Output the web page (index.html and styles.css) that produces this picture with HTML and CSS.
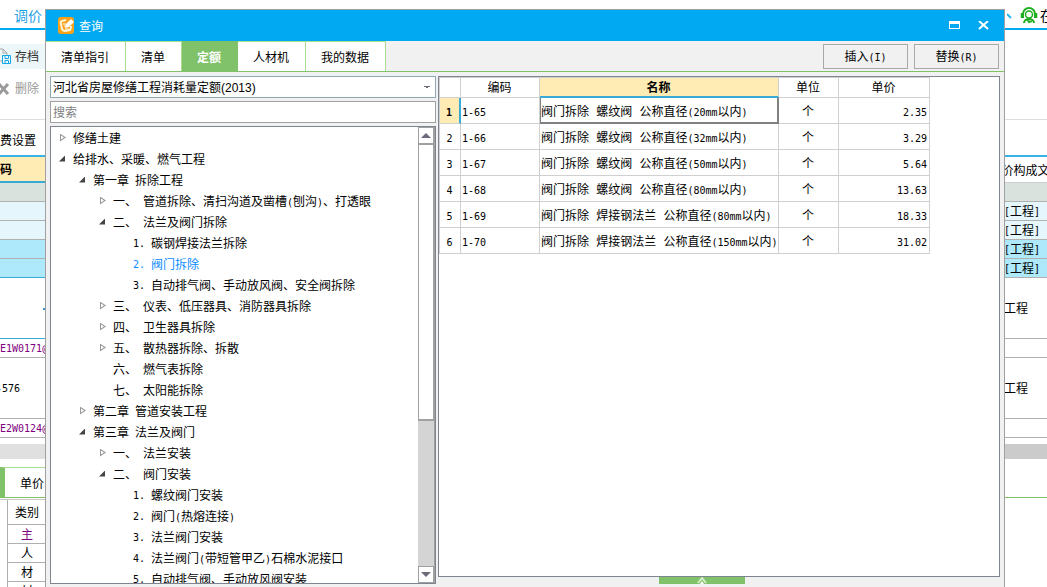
FILE: index.html
```html
<!DOCTYPE html>
<html lang="zh-CN">
<head>
<meta charset="utf-8">
<title>查询</title>
<link rel="stylesheet" href="styles.css">
</head>
<body>
<div class="app">
  <div class="strip strip-left">
    <div class="menu"><a class="menu-link" href="#">调价</a></div>
    <div class="tools">
      <button class="tool active" type="button">
        <svg width="12" height="17" viewBox="0 0 12 17" fill="none"><path d="M0 1H3L7 5V7M3 1V5H7M0 13H3" stroke="#a9a9a9"/><path d="M2.500 7.500H10.500V15.500H2.500ZM5 7V10.500H8.500V7M5 15V12.500H8.500V15" stroke="#14a9e8"/></svg>
        存档</button>
      <button class="tool muted" type="button">
        <svg width="12" height="16" viewBox="0 0 12 16"><path d="M-1 3L8 13M8 3L-1 13" stroke="#9a9a9a" stroke-width="3"/></svg>
        删除</button>
    </div>
    <div class="setting">费设置</div>
    <div class="cell head key">码</div>
    <div class="cell sum"></div>
    <div class="cell pale"></div>
    <div class="cell pale"></div>
    <div class="cell blue"></div>
    <div class="cell blue line-blue"></div>
    <div class="cell tall line-blue"><i class="tick"></i></div>
    <div class="cell code"><span class="n">E1W0171@</span></div>
    <div class="cell tall spec"><span class="n">-576</span></div>
    <div class="cell code"><span class="n">E2W0124@</span></div>
    <div class="hscroll light"></div>
    <div class="subtab">单价</div>
    <div class="kinds">
      <div class="kind kind-head">类别</div>
      <div class="kind purple">主</div>
      <div class="kind">人</div>
      <div class="kind">材</div>
      <div class="kind">材</div>
    </div>
  </div>
  <div class="middle"></div>
  <div class="strip strip-right">
    <div class="menu">
      <svg class="caret" width="5" height="8" viewBox="0 0 5 8"><path d="M0 2L4 6" stroke="#2db5ef" stroke-width="2"/></svg>
      <svg class="help" width="18" height="18" viewBox="0 0 18 18" fill="none" stroke="#1fae1f"><path d="M3 11V7a6 6 0 0 1 12 0v4" stroke-width="2"/><path d="M2 6v5M16 6v5" stroke-width="2.500"/><circle cx="9" cy="7.500" r="3.500" stroke-width="1.500"/><path d="M4 16c0-3 3-4 5-4s5 1 5 4M7 12l2 3 3-1" stroke-width="2"/></svg>
      <span>在线</span>
    </div>
    <div class="tools"></div>
    <div class="setting"></div>
    <div class="cell head">价构成文</div>
    <div class="cell sum"></div>
    <div class="cell pale"><span class="n">[</span>工程<span class="n">]</span></div>
    <div class="cell pale"><span class="n">[</span>工程<span class="n">]</span></div>
    <div class="cell blue"><span class="n">[</span>工程<span class="n">]</span></div>
    <div class="cell blue"><span class="n">[</span>工程<span class="n">]</span></div>
    <div class="cell tall">工程</div>
    <div class="cell"></div>
    <div class="cell tall">工程</div>
    <div class="cell"></div>
    <div class="hscroll"></div>
    <div class="subline"></div>
  </div>
</div>

<div class="dialog" role="dialog" aria-label="查询">
  <header class="titlebar">
    <svg width="17" height="17" viewBox="0 0 17 17" fill="none"><rect width="16" height="17" rx="3" fill="#f8a21b"/><path d="M8 3L4 4Q2 5 3 7L4 12Q5 14 7 14L12 13Q13 12 13 9" stroke="#fff3d6" stroke-width="2"/><path d="M7 11L8 7L13 2L16 5L11 10Z" fill="#fff"/><path d="M5 7H8M6 9H8M7 12H11" stroke="#fff"/></svg>
    <h1 class="title">查询</h1>
    <button class="win" type="button" aria-label="最大化"><svg width="11" height="9" viewBox="0 0 11 9"><path d="M0 0H11V8H0ZM1 3V7H10V3Z" fill="#fff" fill-rule="evenodd"/></svg></button>
    <button class="win" type="button" aria-label="关闭"><svg width="11" height="9" viewBox="0 0 11 9"><path d="M1 0L10 8M10 0L1 8" stroke="#fff" stroke-width="2"/></svg></button>
  </header>
  <div class="bar">
    <nav class="tabs">
      <button class="tab" type="button">清单指引</button>
      <button class="tab" type="button">清单</button>
      <button class="tab current" type="button">定额</button>
      <button class="tab" type="button">人材机</button>
      <button class="tab" type="button">我的数据</button>
    </nav>
    <div class="actions">
      <button class="action" type="button">插入<span class="n">(I)</span></button>
      <button class="action" type="button">替换<span class="n">(R)</span></button>
    </div>
  </div>
  <div class="body">
    <section class="side">
      <select class="field combo" aria-label="定额库"><option>河北省房屋修缮工程消耗量定额(2013)</option></select>
      <input class="field search" type="text" placeholder="搜索" aria-label="搜索">
      <div class="tree-box">
        <ul class="tree">
          <li class="row l0 closed">修缮土建</li>
          <li class="row l0 open">给排水、采暖、燃气工程</li>
          <li class="row l1 open"><span>第一章</span><span>拆除工程</span></li>
          <li class="row l2 closed"><span>一、</span><span>管道拆除、清扫沟道及凿槽<span class="n">(</span>刨沟<span class="n">)</span>、打透眼</span></li>
          <li class="row l2 open"><span>二、</span><span>法兰及阀门拆除</span></li>
          <li class="row l3"><span class="n">1.</span><span>碳钢焊接法兰拆除</span></li>
          <li class="row l3 picked"><span class="n">2.</span><span>阀门拆除</span></li>
          <li class="row l3"><span class="n">3.</span><span>自动排气阀、手动放风阀、安全阀拆除</span></li>
          <li class="row l2 closed"><span>三、</span><span>仪表、低压器具、消防器具拆除</span></li>
          <li class="row l2 closed"><span>四、</span><span>卫生器具拆除</span></li>
          <li class="row l2 closed"><span>五、</span><span>散热器拆除、拆散</span></li>
          <li class="row l2"><span>六、</span><span>燃气表拆除</span></li>
          <li class="row l2"><span>七、</span><span>太阳能拆除</span></li>
          <li class="row l1 closed"><span>第二章</span><span>管道安装工程</span></li>
          <li class="row l1 open"><span>第三章</span><span>法兰及阀门</span></li>
          <li class="row l2 closed"><span>一、</span><span>法兰安装</span></li>
          <li class="row l2 open"><span>二、</span><span>阀门安装</span></li>
          <li class="row l3"><span class="n">1.</span><span>螺纹阀门安装</span></li>
          <li class="row l3"><span class="n">2.</span><span>阀门<span class="n">(</span>热熔连接<span class="n">)</span></span></li>
          <li class="row l3"><span class="n">3.</span><span>法兰阀门安装</span></li>
          <li class="row l3"><span class="n">4.</span><span>法兰阀门<span class="n">(</span>带短管甲乙<span class="n">)</span>石棉水泥接口</span></li>
          <li class="row l3"><span class="n">5.</span><span>自动排气阀、手动放风阀安装</span></li>
        </ul>
        <div class="scroll">
          <button class="step" type="button" aria-label="向上"><svg width="10" height="5" viewBox="0 0 10 5"><path d="M0 5L5 0L10 5Z" fill="#6b6b7b"/></svg></button>
          <div class="thumb"></div>
          <div class="track"></div>
          <button class="step" type="button" aria-label="向下"><svg width="10" height="5" viewBox="0 0 10 5"><path d="M0 0L5 5L10 0Z" fill="#6b6b7b"/></svg></button>
        </div>
      </div>
    </section>
    <section class="main">
      <div class="grid-box">
        <table class="grid">
          <colgroup><col class="c-no"><col class="c-code"><col class="c-name"><col class="c-unit"><col class="c-price"></colgroup>
          <thead><tr><th></th><th>编码</th><th class="hot">名称</th><th>单位</th><th>单价</th></tr></thead>
          <tbody>
            <tr><th class="on"><span class="n">1</span></th><td><span class="n">1-65</span></td><td class="focus">阀门拆除 螺纹阀 公称直径<span class="n">(20mm</span>以内<span class="n">)</span></td><td class="mid">个</td><td class="num"><span class="n">2.35</span></td></tr>
            <tr><th><span class="n">2</span></th><td><span class="n">1-66</span></td><td>阀门拆除 螺纹阀 公称直径<span class="n">(32mm</span>以内<span class="n">)</span></td><td class="mid">个</td><td class="num"><span class="n">3.29</span></td></tr>
            <tr><th><span class="n">3</span></th><td><span class="n">1-67</span></td><td>阀门拆除 螺纹阀 公称直径<span class="n">(50mm</span>以内<span class="n">)</span></td><td class="mid">个</td><td class="num"><span class="n">5.64</span></td></tr>
            <tr><th><span class="n">4</span></th><td><span class="n">1-68</span></td><td>阀门拆除 螺纹阀 公称直径<span class="n">(80mm</span>以内<span class="n">)</span></td><td class="mid">个</td><td class="num"><span class="n">13.63</span></td></tr>
            <tr><th><span class="n">5</span></th><td><span class="n">1-69</span></td><td>阀门拆除 焊接钢法兰 公称直径<span class="n">(80mm</span>以内<span class="n">)</span></td><td class="mid">个</td><td class="num"><span class="n">18.33</span></td></tr>
            <tr><th><span class="n">6</span></th><td><span class="n">1-70</span></td><td>阀门拆除 焊接钢法兰 公称直径<span class="n">(150mm</span>以内<span class="n">)</span></td><td class="mid">个</td><td class="num"><span class="n">31.02</span></td></tr>
          </tbody>
        </table>
      </div>
      <button class="pull" type="button" aria-label="展开"><svg width="10" height="7" viewBox="0 0 10 7"><path d="M1 6L5 1L9 6" stroke="#d5ecca" stroke-width="2" fill="none"/><path d="M3 7L5 4L7 7Z" fill="#fff"/></svg></button>
    </section>
  </div>
</div>
</body>
</html>
```
FILE: styles.css
```css
* { box-sizing: border-box; }

html, body { height: 100%; margin: 0; }

body {
  overflow: hidden;
  background: #fff;
  color: #000;
  font: 12px/18px "DejaVu Sans Mono", "Noto Sans CJK SC", sans-serif;
}

button, input, select { margin: 0; font: inherit; color: inherit; }
button { border: 0; padding: 0; background: none; }

/* Half-width characters, half as wide as a Chinese one */
.n { font-size: 10px; line-height: 1; }

/* Application behind the dialog */
.app { display: grid; grid-template-columns: 46px 1fr 43px; height: 100%; overflow: hidden; }
.strip { overflow: hidden; white-space: nowrap; }

.menu { display: flex; align-items: center; height: 30px; border-bottom: 2px solid #00a9f1; padding-top: 4px; }
.menu-link { margin-left: 14px; color: #1f9fe6; font-size: 14px; text-decoration: none; }
.caret { flex: none; }
.help { margin: 0 2px 0 8px; flex: none; }
.strip-right .menu { font-size: 14px; padding-left: 3px; }

.tools { height: 90px; padding-top: 14px; border-bottom: 1px solid #ddd; }
.tool { display: flex; align-items: center; gap: 3px; width: 100%; height: 25px; margin-bottom: 7px; white-space: nowrap; color: #333; }
.tool.active { background: #edf6f9; }
.tool.muted { color: #999; }

.setting { height: 37px; padding-top: 12px; border-bottom: 2px solid #39b3e4; }

.cell { display: flex; align-items: center; height: 19px; padding-top: 2px; border-bottom: 1px solid #b0b0b0; }
.cell.head { height: 26px; border-color: #d0d0d0; }
.strip-right .head { justify-content: center; }
.cell.key { background: #ffecb4; border-bottom: 2px solid #39a9d6; font-weight: bold; }
.cell.sum { background: #dae2dd; }
.cell.pale { background: #e5f7fd; }
.cell.blue { background: #ade8fb; }
.cell.tall { height: 61px; }
.cell.line-blue { border-color: #39a9d6; }
.cell.code { color: #800080; }
.cell.spec { text-indent: -4px; }
.tick { width: 3px; height: 2px; margin-left: 43px; background: #3d8fce; }

.hscroll { height: 15px; margin: 6px 0 8px; background: #cbcbcb; }
.hscroll.light { background: #e0e0e0; }
.subtab { height: 31px; padding: 7px 0 0 15px; border-left: 5px solid #80c269; border-top: 1px solid #a8de90; border-bottom: 1px solid #80c269; }
.subline { height: 31px; border-bottom: 1px solid #80c269; }
.kinds { margin-top: 1px; border-top: 1px solid #c8c8c8; }
.kind { height: 19px; margin-left: 7px; border-left: 1px solid #b0b0b0; border-bottom: 1px solid #b0b0b0; line-height: 20px; text-align: center; }
.kind-head { height: 25px; line-height: 26px; }
.purple { color: #800080; }

/* Dialog window over the application */
.dialog {
  position: absolute;
  inset: 9px 42px 0 45px;
  display: flex;
  flex-direction: column;
  border: solid #a0a0a0;
  border-width: 1px 1px 0;
  background: #f1f1f1;
}

.titlebar { display: flex; align-items: center; height: 31px; padding: 0 15px 0 12px; background: #00a9f1; color: #fff; }
.title { flex: 1; margin: 0 0 0 4px; padding-top: 2px; font-size: 12px; font-weight: normal; }
.win { display: flex; margin-left: 18px; }

.bar { display: flex; justify-content: space-between; height: 31px; border-bottom: 1px solid #80c269; }
.tabs { display: flex; }
.tab { padding: 2px 16px 0 15px; border-top: 1px solid #a8de90; border-right: 1px solid #a8de90; background: #fff; }
.tab.current { background: #80c269; border-color: #80c269; color: #fff; font-weight: bold; }
.actions { display: flex; align-items: center; gap: 6px; padding-right: 5px; }
.action { width: 85px; height: 25px; padding-top: 2px; border: 1px solid #a9a9a9; }

.body { flex: 1; min-height: 0; display: flex; gap: 2px; padding: 4px 4px 3px; }
.side { display: flex; flex-direction: column; gap: 3px; flex: 0 0 386px; min-height: 0; }
.field { width: 100%; height: 22px; border: 1px solid #a0a0a0; border-radius: 0; padding: 1px 2px 0; background: #fff; font-family: "Liberation Sans", "Noto Sans CJK SC", sans-serif; }
.combo {
  appearance: none;
  border-color: #8fa9b4;
  background:
    linear-gradient(225deg, #6b6b7b 50%, transparent 50%) right 8px top 9px / 3px 3px no-repeat,
    linear-gradient(135deg, #6b6b7b 50%, transparent 50%) right 5px top 9px / 3px 3px no-repeat,
    #fff;
}
.search::placeholder { color: #808080; opacity: 1; }

.tree-box { flex: 1; min-height: 0; display: flex; border: 1px solid #7e8490; background: #fff; overflow: hidden; }
.tree { flex: 1; min-width: 0; margin: 0; padding: 1px 0 0 8px; list-style: none; overflow: hidden; white-space: nowrap; }
.row { display: flex; align-items: center; gap: 6px; height: 21px; }
.row::before { content: ""; flex: none; width: 8px; height: 8px; }
.row .n { flex: none; }
.l1 { padding-left: 20px; }
.l2 { padding-left: 40px; }
.l3 { padding-left: 60px; }
.open::before { width: 6px; height: 6px; margin: 0 2px 2px 0; background: #444; clip-path: polygon(100% 0, 100% 100%, 0 100%); }
.closed::before { margin-bottom: 2px; background: #999; clip-path: polygon(1px 0, 7px 4px, 1px 8px, 1px 0, 2px 2px, 2px 6px, 5px 4px, 2px 2px); }
.picked { color: #0a8cff; }

.scroll { display: flex; flex-direction: column; width: 17px; background: #d4d4d4; border-right: 1px solid #a0a0a0; }
.step { display: flex; align-items: center; justify-content: center; height: 17px; border: 1px solid #a0a0a0; background: #fff; }
.thumb { flex: 276; border: 1px solid #a0a0a0; border-bottom-width: 2px; background: #fff; }
.track { flex: 146; }

.main { flex: 1; min-width: 0; display: flex; flex-direction: column; align-items: center; }
.grid-box { flex: 1; width: 100%; border: 1px solid #7e8490; background: #fff; overflow: hidden; }
.grid { width: 491px; table-layout: fixed; border-collapse: separate; border-spacing: 0; border-top: 1px solid #d0d0d0; border-left: 1px solid #d0d0d0; }
.c-no { width: 21px; }
.c-code { width: 79px; }
.c-name { width: 239px; }
.c-unit { width: 60px; }
.c-price { width: 91px; }
.grid th, .grid td { height: 26px; padding: 2px 2px 0 1px; border-right: 1px solid #d0d0d0; border-bottom: 1px solid #d0d0d0; font-weight: normal; text-align: left; white-space: nowrap; }
.grid th { text-align: center; }
.grid thead th { height: 20px; padding-top: 2px; line-height: 17px; }
.grid .hot { background: #ffecb4; border-bottom: 2px solid #39a9d6; font-weight: bold; }
.grid thead .hot { line-height: 16px; }
.grid .on { background: #ffecb4; border-right: 2px solid #39a9d6; font-weight: bold; }
.grid .focus { box-shadow: inset 1px 0 #808080, inset -1px -1px #808080; border-color: #808080; }
.grid .mid { text-align: center; }
.grid .num { text-align: right; }

.pull { display: flex; justify-content: center; width: 86px; height: 7px; margin-right: 34px; background: #80c269; }
```
